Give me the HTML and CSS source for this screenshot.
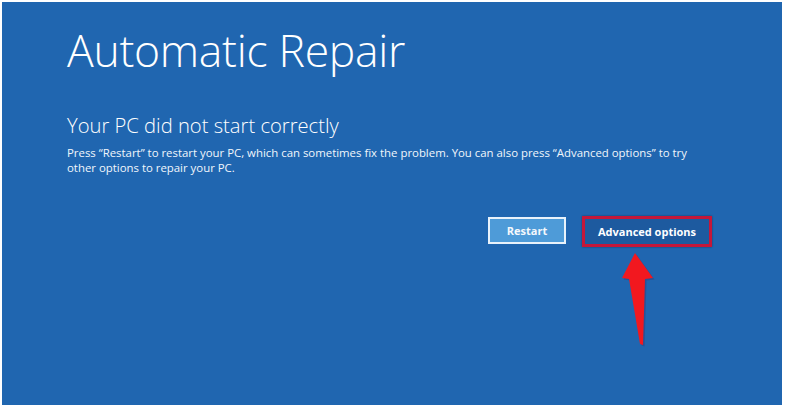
FILE: index.html
```html
<!DOCTYPE html>
<html lang="en">
<head>
<meta charset="utf-8">
<title>Automatic Repair</title>
<link rel="stylesheet" href="styles.css">
</head>
<body>
<main class="screen">
  <h1 class="title">Automatic Repair</h1>
  <h2 class="subtitle">Your PC did not start correctly</h2>
  <p class="message">Press “Restart” to restart your PC, which can sometimes fix the problem. You can also press “Advanced options” to try<br>other options to repair your PC.</p>
  <div class="actions">
    <button class="btn btn-restart">Restart</button>
    <div class="advanced-wrap">
      <button class="btn btn-advanced">Advanced options</button>
      <svg class="arrow" width="40" height="96" viewBox="0 0 40 96" aria-hidden="true">
        <path d="M14 1 L1 26 L8 27 L19 92 L22 93 L24 27 L32 26 Z" fill="#3a2a6a" opacity="0.35" transform="translate(1.5,1.5)"/>
        <path d="M14 1 L1 26 L8 27 L19 92 L22 93 L24 27 L32 26 Z" fill="#f2181f"/>
      </svg>
    </div>
  </div>
</main>
</body>
</html>
```
FILE: styles.css
```css
html, body {
  margin: 0;
  padding: 0;
  background: #ffffff;
}
body {
  width: 785px;
  height: 407px;
  padding: 2px 3px 2px 2px;
  box-sizing: border-box;
}
.screen {
  height: 403px;
  background: #2066b0;
  box-sizing: border-box;
  padding: 20px 0 0 65px;
  color: #ffffff;
  font-family: "Open Sans", "Noto Sans", sans-serif;
}
.title {
  margin: 0;
  font-weight: 300;
  font-size: 44.5px;
  line-height: 56px;
  letter-spacing: -0.3px;
}
.subtitle {
  margin: 35px 0 0 0;
  font-weight: 300;
  font-size: 20.2px;
  line-height: 24px;
}
.message {
  margin: 8px 0 0 0;
  font-size: 11.4px;
  line-height: 15px;
  color: #f0f6fc;
}
.actions {
  display: flex;
  margin: 41px 0 0 421px;
  align-items: flex-start;
}
.btn {
  font-family: "Open Sans", "Noto Sans", sans-serif;
  font-weight: 700;
  font-size: 11px;
  color: #ffffff;
  cursor: pointer;
  box-sizing: border-box;
}
.btn-restart {
  width: 78px;
  height: 27px;
  margin-top: 1px;
  background: #4e9bd8;
  border: 2px solid #e8f2fb;
  color: #f4f8fc;
}
.advanced-wrap {
  position: relative;
  margin-left: 16px;
}
.btn-advanced {
  width: 130px;
  height: 31px;
  background: #1d5a9f;
  border: 3px solid #c4173a;
  box-shadow: 0 0 2px rgba(0, 0, 0, 0.4);
}
.arrow {
  position: absolute;
  left: 39px;
  top: 36px;
}
```
